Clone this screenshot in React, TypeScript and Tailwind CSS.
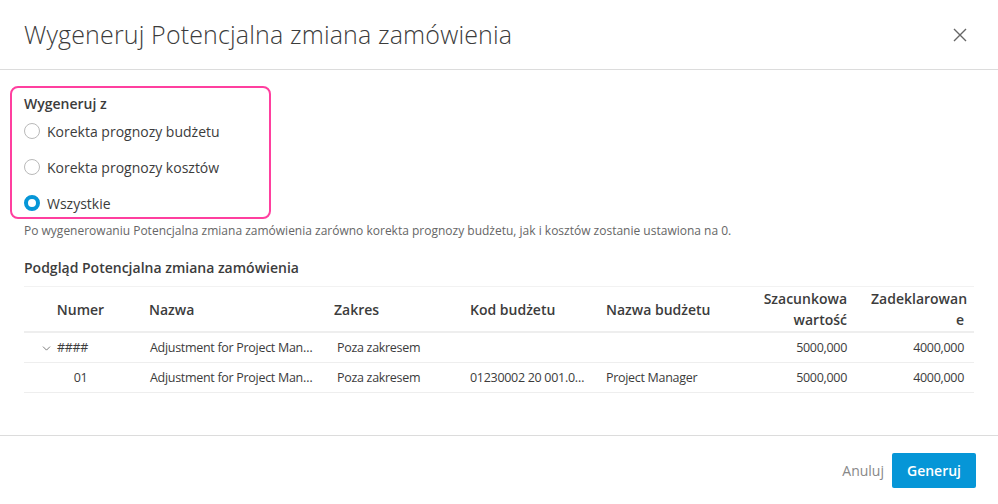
import { ChevronDown } from 'lucide-react';

const COLS = 'grid grid-cols-[113px_185px_136px_136px_148px_117px_117px]';

const rows = [
  { num: '####', group: true, name: 'Adjustment for Project Man…', scope: 'Poza zakresem', code: '', budget: '', est: '5000,000', decl: '4000,000' },
  { num: '01', group: false, name: 'Adjustment for Project Man…', scope: 'Poza zakresem', code: '01230002 20 001.0…', budget: 'Project Manager', est: '5000,000', decl: '4000,000' },
];

function Radio({ label, checked }: { label: string; checked?: boolean }) {
  return (
    <label className="flex h-9 items-center gap-[7px]">
      <span
        className={
          checked
            ? 'h-4 w-4 rounded-full border-[4px] border-[#0696d7] bg-white'
            : 'h-4 w-4 rounded-full border border-[#b9b9b9] bg-white'
        }
      />
      <span className="text-[14px] text-[#3c3c3c]">{label}</span>
    </label>
  );
}

export default function App() {
  return (
    <div
      className="flex h-[504px] w-[998px] flex-col overflow-hidden rounded-[3px] bg-white text-[#3c3c3c]"
      style={{ fontFamily: '"Open Sans", "Noto Sans", sans-serif' }}
    >
      <div className="flex h-[70px] shrink-0 items-center justify-between border-b border-[#dcdcdc] pl-6 pr-[28px]">
        <h1 className="text-[25px] font-light tracking-[0.15px] text-[#3c3c3c]">
          Wygeneruj Potencjalna zmiana zamówienia
        </h1>
        <button type="button" className="grid h-5 w-5 place-items-center text-[#666]" aria-label="Zamknij">
          <svg width="14" height="14" viewBox="0 0 14 14" fill="none" stroke="currentColor" strokeWidth="1.4">
            <path d="M1 1L13 13M13 1L1 13" />
          </svg>
        </button>
      </div>

      <div className="flex-1 px-6 pt-4">
        <div className="-ml-[14px] flex h-[133px] w-[261px] flex-col rounded-[8px] border-2 border-[#ff3f9f] pl-3 pt-[6px]">
          <div className="text-[14px] font-semibold leading-5 text-[#3c3c3c]">Wygeneruj z</div>
          <div className="-mt-[1px] flex flex-col">
            <Radio label="Korekta prognozy budżetu" />
            <Radio label="Korekta prognozy kosztów" />
            <Radio label="Wszystkie" checked />
          </div>
        </div>

        <p className="mt-[2px] text-[12px] leading-5 text-[#666]">
          Po wygenerowaniu Potencjalna zmiana zamówienia zarówno korekta prognozy budżetu, jak i kosztów zostanie ustawiona na 0.
        </p>

        <h2 className="mt-[17px] text-[14px] font-semibold leading-5 text-[#3c3c3c]">
          Podgląd Potencjalna zmiana zamówienia
        </h2>

        <div className="mt-2 border-t border-[#f2f2f2] text-[14px]">
          <div className={`${COLS} h-[46px] items-center border-b-2 border-[#eeeeee] font-semibold leading-[21px]`}>
            <div className="text-center">Numer</div>
            <div className="px-3">Nazwa</div>
            <div className="px-3">Zakres</div>
            <div className="px-3">Kod budżetu</div>
            <div className="px-3">Nazwa budżetu</div>
            <div className="px-3 text-right">
              <span className="block">Szacunkowa</span>
              <span className="block">wartość</span>
            </div>
            <div className="px-3 text-right">
              <span className="block">Zadeklarowan</span>
              <span className="block">e</span>
            </div>
          </div>
          {rows.map((r) => (
            <div
              key={r.num}
              className={`${COLS} h-[30px] items-center border-b border-[#eeeeee] pt-[2px] text-[12.5px] tracking-[-0.3px]`}
            >
              {r.group ? (
                <div className="flex items-center pl-4">
                  <ChevronDown size={13} strokeWidth={1.4} className="text-[#555]" />
                  <span className="ml-[4px]">{r.num}</span>
                </div>
              ) : (
                <div className="text-center">{r.num}</div>
              )}
              <div className="whitespace-nowrap pl-[13px] pr-3">{r.name}</div>
              <div className="whitespace-nowrap pl-[15px] pr-3">{r.scope}</div>
              <div className="whitespace-nowrap px-3">{r.code}</div>
              <div className="whitespace-nowrap px-3">{r.budget}</div>
              <div className="px-3 text-right">{r.est}</div>
              <div className="px-3 text-right">{r.decl}</div>
            </div>
          ))}
        </div>
      </div>

      <div className="flex h-[69px] shrink-0 items-center justify-end gap-2 border-t border-[#dcdcdc] pr-[22px]">
        <button type="button" className="text-[14px] text-[#888]">Anuluj</button>
        <button type="button" className="h-[35px] w-[84px] rounded-[2px] bg-[#0696d7] text-[14px] font-semibold text-white">
          Generuj
        </button>
      </div>
    </div>
  );
}
